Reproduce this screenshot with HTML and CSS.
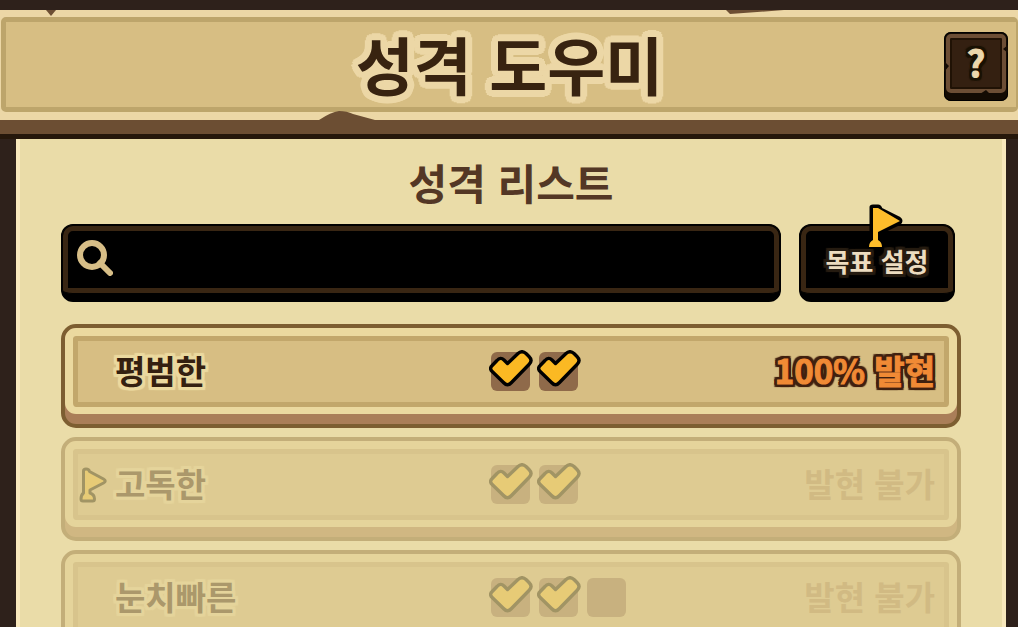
FILE: index.html
```html
<!DOCTYPE html>
<html lang="ko">
<head>
  <meta charset="UTF-8" />
  <title>성격 도우미</title>
  <meta name="viewport" content="width=device-width, initial-scale=1.0" />
  <link rel="stylesheet" href="styles.css">
</head>
<body>
  <!-- 공용 아이콘 -->
  <svg class="icon-defs" aria-hidden="true">
    <symbol id="icon-check" viewBox="0 0 44 37">
      <path d="M3.2 15.5 L8 10.5 Q11.500 6.500 15 10 L18.500 13.500 L29 3.500 Q33 0 37 3.500 L40 6.500 Q44 10.500 40 14.500 L22.500 32.500 Q18.500 37 14.500 32.500 L3.200 21.500 Q0 18.500 3.200 15.500 Z" stroke-width="3.400" stroke-linejoin="round" />
    </symbol>
    <symbol id="icon-flag" viewBox="0 0 28 36">
      <path d="M4.500 4 Q4.500 2 7 2 Q10 2 10.500 4.500 L24.500 12 Q28 14 24.500 16 L11 23 V26 Q15.500 27.500 15.500 32 Q15.500 34 13.500 34 H4 Q2 34 2 32 Q2 28 4.500 26 Z" stroke-width="3" stroke-linejoin="round" />
    </symbol>
  </svg>

  <div class="app">
    <header class="header">
      <div class="header-plate">
        <h1>성격 도우미</h1>
        <button class="help-button" type="button" aria-label="도움말">
          <span class="help-face">?</span>
          <svg class="help-cracks" viewBox="0 0 64 69" aria-hidden="true">
            <path d="M0 29 L5 34 L0 40 Z M64 13 L59 17 L64 21 Z M36 62 L42 58 L46 62 Z" />
          </svg>
        </button>
      </div>
      <svg class="chip chip-left" viewBox="0 0 10 6" aria-hidden="true"><path d="M0 0 H10 L5 6 Z" /></svg>
      <svg class="chip chip-right" viewBox="0 0 58 4" aria-hidden="true"><path d="M0 0 H58 L4 4 Z" /></svg>
      <svg class="chip chip-bottom" viewBox="0 0 56 9" aria-hidden="true"><path d="M0 9 Q12 1 20 0 Q28 0 34 3 L56 9 Z" /></svg>
    </header>

    <main class="panel">
      <h2>성격 리스트</h2>

      <div class="toolbar">
        <label class="search">
          <svg class="search-icon" viewBox="0 0 36 36" aria-hidden="true">
            <circle cx="15" cy="15" r="12" />
            <path d="M23 23 L33 33" />
          </svg>
          <input type="text" aria-label="성격 검색">
        </label>
        <button class="goal-button" type="button">
          <svg class="goal-flag" viewBox="0 0 34 43" aria-hidden="true">
            <path class="goal-flag-line" d="M2 40 V3 Q2 2 4 2 H9 Q11 2 12 5 L30 14 Q34 17 30 20 L11 29 V40 Z" />
            <path class="goal-flag-fill" d="M4 4 H9 L31 17 L9 28 V36 Q13 38 13 43 H0 Q0 38 4 36 Z" />
          </svg>
          목표 설정
        </button>
      </div>

      <ul class="trait-list">
        <li class="trait">
          <div class="trait-body">
            <span class="trait-flag"></span>
            <span class="trait-name">평범한</span>
            <span class="trait-checks">
              <label class="check"><input type="checkbox" aria-label="평범한 조건 1" checked><svg><use href="#icon-check" /></svg></label>
              <label class="check"><input type="checkbox" aria-label="평범한 조건 2" checked><svg><use href="#icon-check" /></svg></label>
            </span>
            <span class="trait-status trait-status-on">100% 발현</span>
          </div>
        </li>
        <li class="trait trait-off">
          <div class="trait-body">
            <span class="trait-flag"><svg><use href="#icon-flag" /></svg></span>
            <span class="trait-name">고독한</span>
            <span class="trait-checks">
              <label class="check"><input type="checkbox" aria-label="고독한 조건 1" checked><svg><use href="#icon-check" /></svg></label>
              <label class="check"><input type="checkbox" aria-label="고독한 조건 2" checked><svg><use href="#icon-check" /></svg></label>
            </span>
            <span class="trait-status">발현 불가</span>
          </div>
        </li>
        <li class="trait trait-off">
          <div class="trait-body">
            <span class="trait-flag"></span>
            <span class="trait-name">눈치빠른</span>
            <span class="trait-checks">
              <label class="check"><input type="checkbox" aria-label="눈치빠른 조건 1" checked><svg><use href="#icon-check" /></svg></label>
              <label class="check"><input type="checkbox" aria-label="눈치빠른 조건 2" checked><svg><use href="#icon-check" /></svg></label>
              <label class="check"><input type="checkbox" aria-label="눈치빠른 조건 3"><svg><use href="#icon-check" /></svg></label>
            </span>
            <span class="trait-status">발현 불가</span>
          </div>
        </li>
      </ul>
    </main>
  </div>
</body>
</html>
```

FILE: styles.css
```css
* {
  box-sizing: border-box;
}

body {
  margin: 0;
  background-color: #2e211b;
  font-family: "Noto Sans CJK KR", "Noto Sans", sans-serif;
}

button,
input {
  font-family: inherit;
}

.icon-defs {
  display: none;
}

.app {
  display: flex;
  flex-direction: column;
  height: 100vh;
  padding-top: 10px;
  overflow: hidden;
}

/* 글자 테두리 */
h1 {
  --halo: #ecd7a6;
  text-shadow:
    7px 0 var(--halo), -7px 0 var(--halo), 0 7px var(--halo), 0 -7px var(--halo),
    5px 5px var(--halo), -5px 5px var(--halo), 5px -5px var(--halo), -5px -5px var(--halo),
    6px 3px var(--halo), -6px 3px var(--halo), 6px -3px var(--halo), -6px -3px var(--halo),
    3px 6px var(--halo), -3px 6px var(--halo), 3px -6px var(--halo), -3px -6px var(--halo),
    3px 0 var(--halo), -3px 0 var(--halo), 0 3px var(--halo), 0 -3px var(--halo);
}

.trait-name,
.trait-status-on,
.help-face,
.goal-button {
  text-shadow:
    3px 0 var(--halo), -3px 0 var(--halo), 0 3px var(--halo), 0 -3px var(--halo),
    3px 1px var(--halo), -3px 1px var(--halo), 3px -1px var(--halo), -3px -1px var(--halo),
    1px 3px var(--halo), -1px 3px var(--halo), 1px -3px var(--halo), -1px -3px var(--halo),
    3px 3px 1px var(--halo), -3px 3px 1px var(--halo), 3px -3px 1px var(--halo), -3px -3px 1px var(--halo);
}

/* 상단 제목 */
.header {
  position: relative;
  flex: none;
  padding: 7px 0 8px 1px;
  background-color: #ecd7a6;
  border-bottom: 14px solid #6c4e33;
  box-shadow: 0 5px 0 #25170b;
}

.header-plate {
  display: grid;
  grid-template-columns: 74px 1fr 74px;
  align-items: center;
  height: 95px;
  padding-top: 2px;
  border: 5px solid #bda56b;
  border-right-width: 2px;
  border-radius: 5px;
  background-color: #d7be83;
}

h1 {
  grid-column: 2;
  margin: 0;
  padding: 0 3px 6px 0;
  text-align: center;
  font-size: 63px;
  line-height: 78px;
  font-weight: 700;
  color: #382310;
}

.help-button {
  position: relative;
  justify-self: end;
  width: 64px;
  height: 69px;
  margin-right: 8px;
  padding: 2px 2px 8px;
  border: none;
  border-radius: 7px;
  background-color: #130b03;
  box-shadow: inset 0 0 0 1px #000000;
  cursor: pointer;
}

.help-face {
  --halo: #191103;
  display: block;
  height: 59px;
  border: 4px solid #6c4e35;
  border-radius: 5px;
  background-color: #342011;
  box-shadow: inset 0 0 0 2px #201205;
  font-size: 36px;
  line-height: 46px;
  font-weight: 700;
  color: #ecd7ac;
  -webkit-text-stroke: 1px #ecd7ac;
}

.help-cracks {
  position: absolute;
  inset: 0;
  fill: #130b03;
}

.chip {
  position: absolute;
  fill: #6c4e33;
}

.chip-left {
  top: 0;
  left: 46px;
  width: 10px;
}

.chip-right {
  top: 0;
  right: 234px;
  width: 58px;
}

.chip-bottom {
  bottom: 0;
  left: 319px;
  width: 56px;
}

/* 본문 */
.panel {
  flex: 1;
  min-height: 0;
  margin: 5px 12px 0 16px;
  padding: 11px 41px 0;
  border: solid #f8e8bd;
  border-width: 0 4px;
  background-color: #eadca8;
}

h2 {
  margin: 0;
  text-align: center;
  font-size: 42px;
  line-height: 64px;
  font-weight: 700;
  color: #533725;
}

.toolbar {
  display: flex;
  gap: 18px;
  height: 78px;
  margin: 10px 6px 22px 0;
}

.search,
.goal-button {
  position: relative;
  border: 1px solid #000000;
  border-bottom-width: 8px;
  border-radius: 12px;
  background-color: #000000;
  box-shadow: inset 0 0 0 1px #000000, inset 0 0 0 6px #392613;
}

.search {
  display: flex;
  flex: 1;
  align-items: center;
  gap: 12px;
  padding: 0 15px 3px;
}

.search-icon {
  width: 36px;
  height: 36px;
  fill: none;
  stroke: #d7be87;
  stroke-width: 6px;
  stroke-linecap: round;
}

.search input {
  flex: 1;
  min-width: 0;
  border: none;
  outline: none;
  background: transparent;
  font-size: 33px;
  color: #ecd7a6;
}

.goal-button {
  --halo: #251b10;
  width: 156px;
  padding: 3px 0 0;
  font-size: 26px;
  line-height: 36px;
  font-weight: 700;
  color: #ecdcc0;
  cursor: pointer;
}

.goal-flag {
  position: absolute;
  top: -21px;
  left: 69px;
  width: 34px;
  height: 43px;
  overflow: visible;
}

.goal-flag-line {
  fill: #000000;
  stroke: #000000;
  stroke-width: 3px;
  stroke-linejoin: round;
}

.goal-flag-fill {
  fill: #fdbd2b;
}

/* 성격 목록 */
.trait-list {
  display: flex;
  flex-direction: column;
  gap: 9px;
  margin: 0;
  padding: 0;
  list-style: none;
}

.trait {
  --edge: #7d5e31;
  --rim: #ebd99f;
  --base: #aa7e58;
  --line: #c2a76b;
  --face: #d7be83;
  --text: #342010;
  --box: #8f6a4a;
  --mark: #fbb923;
  --outline: #000000;
  border: 4px solid var(--edge);
  border-radius: 15px;
  background-color: var(--base);
}

.trait-off {
  --edge: #c3ae79;
  --rim: #e5d49b;
  --base: #d0b782;
  --line: #d8c48c;
  --face: #decb92;
  --text: #ab986b;
  --box: #c8b17f;
  --mark: #e7cb76;
  --outline: #a19464;
}

.trait-body {
  display: grid;
  grid-template-columns: 38px calc(50% - 53px) 1fr auto;
  align-items: center;
  height: 86px;
  margin-bottom: 10px;
  padding: 0 14px 0 4px;
  border: 8px solid var(--rim);
  border-bottom-width: 7px;
  border-radius: 11px;
  background-color: var(--face);
  box-shadow: inset 0 0 0 5px var(--line);
}

.trait-flag svg {
  display: block;
  width: 28px;
  height: 36px;
  margin-left: 2px;
  fill: var(--mark);
  stroke: var(--outline);
}

.trait-name,
.trait-status {
  padding-bottom: 4px;
  font-size: 33px;
  line-height: 48px;
  font-weight: 700;
  white-space: nowrap;
}

.trait-name {
  --halo: var(--rim);
  color: var(--text);
}

.trait-status {
  text-align: right;
  color: #d1ba83;
}

.trait-status-on {
  --halo: #40200f;
  color: #f08a35;
  -webkit-text-stroke: 1px #f08a35;
}

.trait-checks {
  display: flex;
  gap: 9px;
}

.check {
  position: relative;
  width: 39px;
  height: 39px;
}

.check input {
  display: block;
  width: 39px;
  height: 39px;
  margin: 0;
  appearance: none;
  border-radius: 6px;
  background-color: var(--box);
}

.check svg {
  position: absolute;
  top: -2px;
  left: -2px;
  display: none;
  width: 44px;
  height: 37px;
  fill: var(--mark);
  stroke: var(--outline);
}

.check input:checked + svg {
  display: block;
}
```
